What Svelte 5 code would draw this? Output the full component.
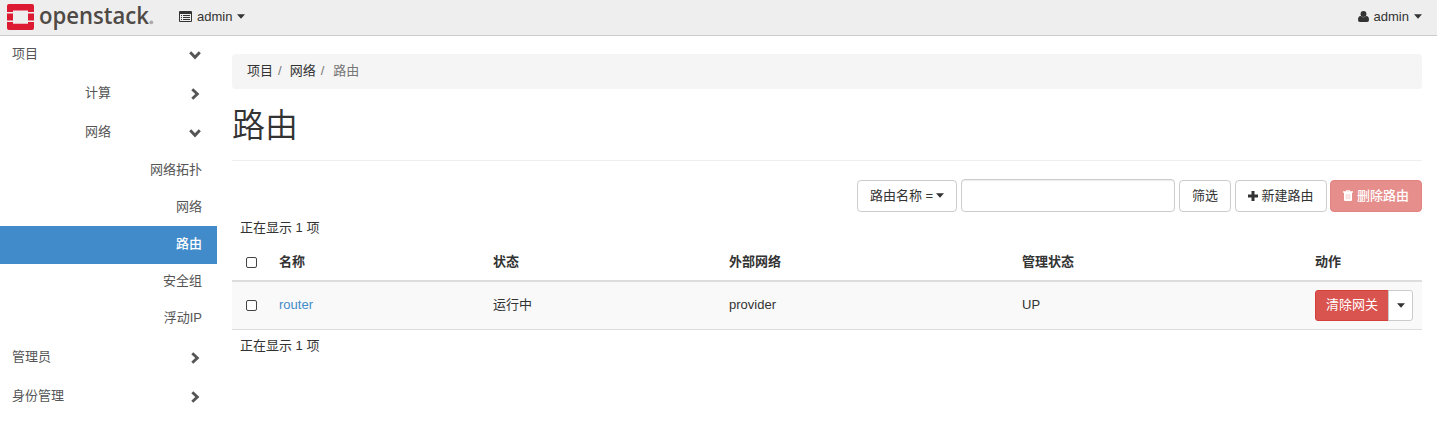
<script>
  const side = [
    { t: '项目', k: 'top', i: 'down' },
    { t: '计算', k: 'mid', i: 'right' },
    { t: '网络', k: 'mid', i: 'down' },
    { t: '网络拓扑', k: 'leaf' },
    { t: '网络', k: 'leaf' },
    { t: '路由', k: 'leaf', active: true },
    { t: '安全组', k: 'leaf' },
    { t: '浮动IP', k: 'leaf' },
    { t: '管理员', k: 'top', i: 'right' },
    { t: '身份管理', k: 'top', i: 'right' }
  ];
</script>

{#snippet caret()}
  <svg class="caret" width="8" height="5" viewBox="0 0 8 5"><path d="M0 .3h8L4 4.700z" fill="currentColor" /></svg>
{/snippet}

<header>
  <div class="left">
    <svg class="logo" width="148" height="35" viewBox="0 0 148 35">
      <g fill="#dc1a32" transform="translate(0 3)">
        <path d="M2 1h23a2 2 0 0 1 2 2v6h-6V7.500H6V9H0V3a2 2 0 0 1 2-2z" />
        <path d="M0 10.500h6v7H0zM21 10.500h6v7h-6z" />
        <path d="M0 19h6v1.800h15V19h6v6a2 2 0 0 1-2 2H2a2 2 0 0 1-2-2z" />
      </g>
      <text x="32" y="24" textLength="110" lengthAdjust="spacingAndGlyphs">openstack</text>
      <circle cx="144.300" cy="22.300" r="1.900" fill="#aaa" />
    </svg>
    <a class="ctx" href="#project">
      <svg width="13" height="11" viewBox="0 0 13 11"><path fill="currentColor" fill-rule="evenodd" d="M1 0h11q1 0 1 1v9q0 1-1 1H1q-1 0-1-1V1q0-1 1-1zM1 3v7h11V3zM2 4h1v1H2zM4 4h7v1H4zM2 6h1v1H2zM4 6h7v1H4zM2 8h1v1H2zM4 8h7v1H4z" /></svg>
      <span>admin</span>{@render caret()}
    </a>
  </div>
  <a class="user" href="#user">
    <svg width="11" height="11" viewBox="0 0 11 11"><path fill="currentColor" d="M5.500 0a2.900 2.900 0 1 1 0 5.900A2.900 2.900 0 0 1 5.500 0zM2.700 4.900q2.800 2.600 5.600 0Q11 5 11 9q0 2-1.900 2H1.900Q0 11 0 9 0 5 2.700 4.900z" /></svg>
    <span>admin</span>{@render caret()}
  </a>
</header>

<div class="body">
  <nav>
    {#each side as s}
      <a class="item {s.k}" class:active={s.active} href="#nav">
        <span>{s.t}</span>
        {#if s.i}
          <svg class="chev" class:down={s.i === 'down'} width="12" height="12" viewBox="0 0 12 12"><path d="M3.300 1.200 8.300 6l-5 4.800" fill="none" stroke="currentColor" stroke-width="2.900" /></svg>
        {/if}
      </a>
    {/each}
  </nav>

  <main>
    <ol class="crumbs"><li>项目</li><li>网络</li><li class="cur">路由</li></ol>
    <h1>路由</h1>
    <div class="tools">
      <button class="btn name">路由名称 = {@render caret()}</button>
      <input type="text" aria-label="filter" />
      <button class="btn filter">筛选</button>
      <button class="btn create">
        <svg width="10" height="10" viewBox="0 0 10 10"><path d="M3.500 0h3v3.500H10v3H6.500V10h-3V6.500H0v-3h3.500z" fill="currentColor" /></svg>新建路由
      </button>
      <button class="btn danger del" disabled>
        <svg width="10" height="11" viewBox="0 0 10 11"><path fill="currentColor" fill-rule="evenodd" d="M3 1.300Q3 0 4 0h2q1 0 1 1.300h3v1.400H9V10q0 1-1 1H2q-1 0-1-1V2.700H0V1.300zm1 0h2V.8H4zM2.900 4v5.300h.4V4zM4.800 4v5.300h.4V4zM6.700 4v5.300h.4V4z" /></svg>删除路由
      </button>
    </div>
    <div class="count">正在显示 1 项</div>
    <table>
      <thead><tr><th class="c0"><i class="box"></i></th><th class="c1">名称</th><th class="c2">状态</th><th class="c3">外部网络</th><th class="c4">管理状态</th><th>动作</th></tr></thead>
      <tbody><tr>
        <td><i class="box"></i></td><td class="tx"><a class="link" href="#router">router</a></td><td class="tx">运行中</td><td class="tx">provider</td><td class="tx">UP</td>
        <td><div class="group"><button class="btn danger clear">清除网关</button><button class="btn more" aria-label="more">{@render caret()}</button></div></td>
      </tr></tbody>
    </table>
    <div class="count bottom">正在显示 1 项</div>
  </main>
</div>

<style>
  :global(body) { background: #fff; }
  :global(#app) { font: 13px/18px "Liberation Sans", "Noto Sans CJK SC", sans-serif; color: #333; }
  header, header *, .body, .body * { box-sizing: border-box; }
  a { color: inherit; text-decoration: none; }
  svg { flex: none; }
  header { height: 36px; background: #eee; border-bottom: 1px solid #ccc; display: flex; justify-content: space-between; padding: 0 15px 0 7px; }
  .left, .ctx, .user { display: flex; align-items: center; }
  .left { align-items: flex-start; }
  .logo { overflow: visible; }
  .logo text { font: 600 24px/1 "Open Sans", sans-serif; fill: #4f4a45; }
  .ctx, .user { height: 33px; }
  .ctx { margin-left: 24px; }
  .ctx span, .user span { margin: 0 5px; }
  .body { display: flex; }
  nav { width: 217px; flex: none; color: #555; }
  .item { display: flex; align-items: center; justify-content: space-between; height: 39px; padding: 0 16px 2px 12px; }
  .item.top span, .item.mid span { position: relative; top: -.5px; }
  .mid { padding-left: 85px; }
  .leaf { height: 37px; padding: 0 15px 1px; justify-content: flex-end; }
  .mid + .leaf { margin-top: -1px; }
  .leaf.active { height: 38px; margin-bottom: -1px; padding-bottom: 2px; background: #428bca; color: #fff; font-weight: 500; }
  .leaf + .top { margin-top: 2px; }
  .chev.down { transform: rotate(90deg); }
  main { flex: 1; padding: 18px 15px 0; }
  .crumbs { list-style: none; margin: 0; height: 35px; padding: 8px 15px; background: #f5f5f5; border-radius: 4px; display: flex; }
  .crumbs li + li::before { content: "/"; color: #777; padding: 0 8px 0 5px; }
  .crumbs .cur::before { padding-right: 9px; }
  .cur { color: #777; }
  h1 { margin: 0 0 18px; height: 72px; padding-top: 18px; border-bottom: 1px solid #eee; font-size: 33px; line-height: 38px; font-weight: 350; }
  .tools { display: flex; justify-content: flex-end; align-items: flex-end; height: 33px; gap: 4px; }
  .btn { font: inherit; color: #333; height: 32px; border: 1px solid #ccc; border-radius: 4px; background: #fff; padding: 0 0 1px; display: flex; align-items: center; justify-content: center; white-space: nowrap; }
  .name { width: 100px; gap: 3px; }
  input { width: 214px; height: 33px; border: 1px solid #ccc; border-radius: 4px; box-shadow: inset 0 1px 1px rgba(0, 0, 0, .075); }
  .filter { width: 52px; }
  .create { width: 92px; gap: 3px; }
  .danger { background: #d9534f; border-color: #d43f3a; color: #fff; }
  .btn.del { width: 92px; gap: 4px; opacity: .65; font-weight: 500; margin-left: -1px; }
  .count { height: 32px; padding: 7px 8px 0; }
  table { width: 100%; table-layout: fixed; border-collapse: separate; border-spacing: 0; border-bottom: 1px solid #ddd; }
  th, td { text-align: left; padding: 0; vertical-align: middle; }
  th { height: 38px; border-bottom: 2px solid #ddd; font-weight: 700; }
  td { height: 47px; background: #f9f9f9; }
  td.tx { padding-bottom: 2px; }
  .c0 { width: 47px; } .c1 { width: 214px; } .c2 { width: 236px; } .c3 { width: 293px; } .c4 { width: 293px; }
  .box { display: block; width: 11px; height: 11px; margin-left: 14px; border: 1px solid #444; border-radius: 2px; background: #fff; }
  td .box { margin-top: -1px; }
  .link { color: #428bca; }
  .group { display: flex; }
  .clear { width: 74px; height: 31px; border-radius: 3px 0 0 3px; }
  .more { width: 25px; height: 31px; border-radius: 0 3px 3px 0; margin-left: -1px; }
</style>
